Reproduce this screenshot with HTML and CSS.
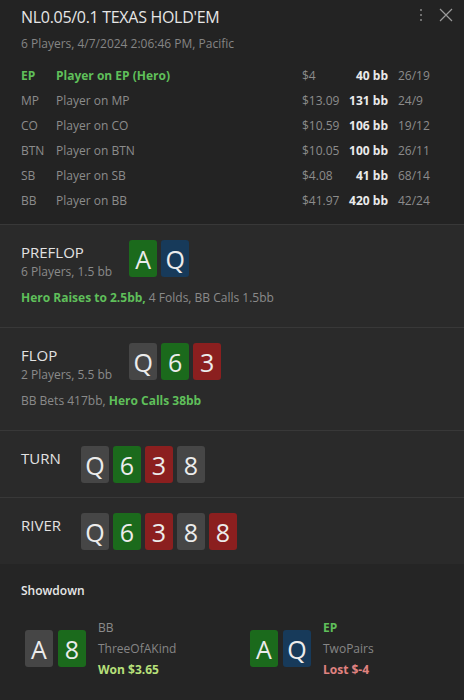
FILE: index.html
```html
<!DOCTYPE html>
<html lang="en">
<head>
  <meta charset="UTF-8">
  <title>Hand History</title>
  <meta name="viewport" content="width=device-width, initial-scale=1">
  <link rel="stylesheet" href="styles.css">
</head>
<body>
  <div class="panel">
    <div class="header">
      <div class="title-row">
        <h1>NL0.05/0.1 TEXAS HOLD'EM</h1>
        <div class="tools">
          <svg width="4" height="14" viewBox="0 0 4 14"><circle cx="2" cy="2" r="1" fill="#8a8a8a"/><circle cx="2" cy="7" r="1" fill="#8a8a8a"/><circle cx="2" cy="12" r="1" fill="#8a8a8a"/></svg>
          <svg width="14" height="14" viewBox="0 0 14 14"><path d="M1 1L13 13M13 1L1 13" stroke="#9a9a9a" stroke-width="1.2"/></svg>
        </div>
      </div>
      <div class="sub">6 Players, 4/7/2024 2:06:46 PM, Pacific</div>

      <table class="players">
        <tr class="hero"><td class="pos">EP</td><td class="name">Player on EP (Hero)</td><td class="money">$4</td><td class="bb">40 bb</td><td class="ratio">26/19</td></tr>
        <tr><td class="pos">MP</td><td class="name">Player on MP</td><td class="money">$13.09</td><td class="bb">131 bb</td><td class="ratio">24/9</td></tr>
        <tr><td class="pos">CO</td><td class="name">Player on CO</td><td class="money">$10.59</td><td class="bb">106 bb</td><td class="ratio">19/12</td></tr>
        <tr><td class="pos">BTN</td><td class="name">Player on BTN</td><td class="money">$10.05</td><td class="bb">100 bb</td><td class="ratio">26/11</td></tr>
        <tr><td class="pos">SB</td><td class="name">Player on SB</td><td class="money">$4.08</td><td class="bb">41 bb</td><td class="ratio">68/14</td></tr>
        <tr><td class="pos">BB</td><td class="name">Player on BB</td><td class="money">$41.97</td><td class="bb">420 bb</td><td class="ratio">42/24</td></tr>
      </table>
    </div>

    <div class="street">
      <div class="street-head">
        <div class="street-info">
          <div class="street-name">PREFLOP</div>
          <div class="street-sub">6 Players, 1.5 bb</div>
        </div>
        <div class="cards">
          <span class="card green">A</span><span class="card blue">Q</span>
        </div>
      </div>
      <div class="actions"><b>Hero Raises to 2.5bb,</b> 4 Folds, BB Calls 1.5bb</div>
    </div>

    <div class="street">
      <div class="street-head">
        <div class="street-info">
          <div class="street-name">FLOP</div>
          <div class="street-sub">2 Players, 5.5 bb</div>
        </div>
        <div class="cards">
          <span class="card gray">Q</span><span class="card green">6</span><span class="card red">3</span>
        </div>
      </div>
      <div class="actions">BB Bets 417bb, <b>Hero Calls 38bb</b></div>
    </div>

    <div class="street short">
      <div class="street-head">
        <div class="street-name narrow">TURN</div>
        <div class="cards">
          <span class="card gray">Q</span><span class="card green">6</span><span class="card red">3</span><span class="card gray">8</span>
        </div>
      </div>
    </div>

    <div class="street short">
      <div class="street-head">
        <div class="street-name narrow">RIVER</div>
        <div class="cards">
          <span class="card gray">Q</span><span class="card green">6</span><span class="card red">3</span><span class="card gray">8</span><span class="card red">8</span>
        </div>
      </div>
    </div>

    <div class="showdown">
      <div class="showdown-title">Showdown</div>
      <div class="hands">
        <div class="hand">
          <div class="cards wide">
            <span class="card gray">A</span><span class="card green">8</span>
          </div>
          <div class="hand-info">
            <div class="hand-pos">BB</div>
            <div class="hand-rank">ThreeOfAKind</div>
            <div class="won">Won $3.65</div>
          </div>
        </div>
        <div class="hand">
          <div class="cards wide">
            <span class="card green">A</span><span class="card blue">Q</span>
          </div>
          <div class="hand-info">
            <div class="hand-pos hero-pos">EP</div>
            <div class="hand-rank">TwoPairs</div>
            <div class="lost">Lost $-4</div>
          </div>
        </div>
      </div>
    </div>
  </div>
</body>
</html>
```

FILE: styles.css
```css
body { margin: 0; background: #242424; font-family: "Open Sans", "Noto Sans", sans-serif; color: #8c8c8c; }
.panel { width: 464px; height: 700px; overflow: hidden; background: #242424; }

.header { padding: 6px 11px 11px 21px; background: #232323; }
.title-row { display: flex; justify-content: space-between; align-items: center; }
h1 { margin: 0; font-size: 16px; font-weight: 400; color: #e6e6e6; letter-spacing: -0.3px; line-height: 22px; }
.tools { display: flex; align-items: center; gap: 16px; margin-top: -4px; }
.sub { font-size: 12px; margin-top: 7px; color: #858585; }

.players { border-collapse: collapse; margin-top: 11px; font-size: 12px; table-layout: fixed; width: 430px; }
.players td { padding: 0; height: 25px; white-space: nowrap; }
.pos { width: 35px; }
.name { width: 246px; }
.money { width: 44px; }
.bb { width: 42px; text-align: right; color: #eaeaea; font-weight: 700; }
.ratio { padding-left: 10px !important; width: 63px; }
.hero .pos, .hero .name { color: #5fbf5a; font-weight: 700; }

.street { border-top: 1px solid #383838; background: #2a2a2a; padding: 15px 21px 21px; }
.street-head { display: flex; align-items: flex-start; gap: 17px; }
.street-info { margin-top: 2px; }
.street-name { font-size: 15px; line-height: 20px; color: #e2e2e2; }
.street-sub { font-size: 12px; line-height: 18px; margin-top: 1px; color: #8a8a8a; }
.street-name.narrow { width: 43px; margin-top: 2px; }
.short { padding-bottom: 14px; }
.actions { font-size: 12px; line-height: 17px; margin-top: 8px; color: #8a8a8a; }
.actions b { color: #5fbf5a; }

.cards { display: flex; gap: 4px; }
.cards.wide { gap: 5px; }
.card { width: 28px; height: 37px; border-radius: 3px; display: flex; align-items: center; justify-content: center; font-size: 25px; color: #ececec; }
.green { background: #1b6a1c; }
.blue { background: #173a5a; }
.red { background: #8b1f1f; }
.gray { background: #464646; }

.showdown { background: #252525; padding: 18px 21px 30px; }
.showdown-title { font-size: 12px; font-weight: 600; color: #e8e8e8; }
.hands { display: flex; margin-top: 18px; padding-left: 4px; }
.hand { display: flex; gap: 12px; width: 225px; flex-shrink: 0; align-items: center; }
.hand-info { font-size: 12px; line-height: 21px; }
.hand-rank { color: #868686; }
.hero-pos { color: #5fbf5a; font-weight: 700; }
.won { color: #b7e07a; font-weight: 700; }
.lost { color: #e08280; font-weight: 700; }
```
